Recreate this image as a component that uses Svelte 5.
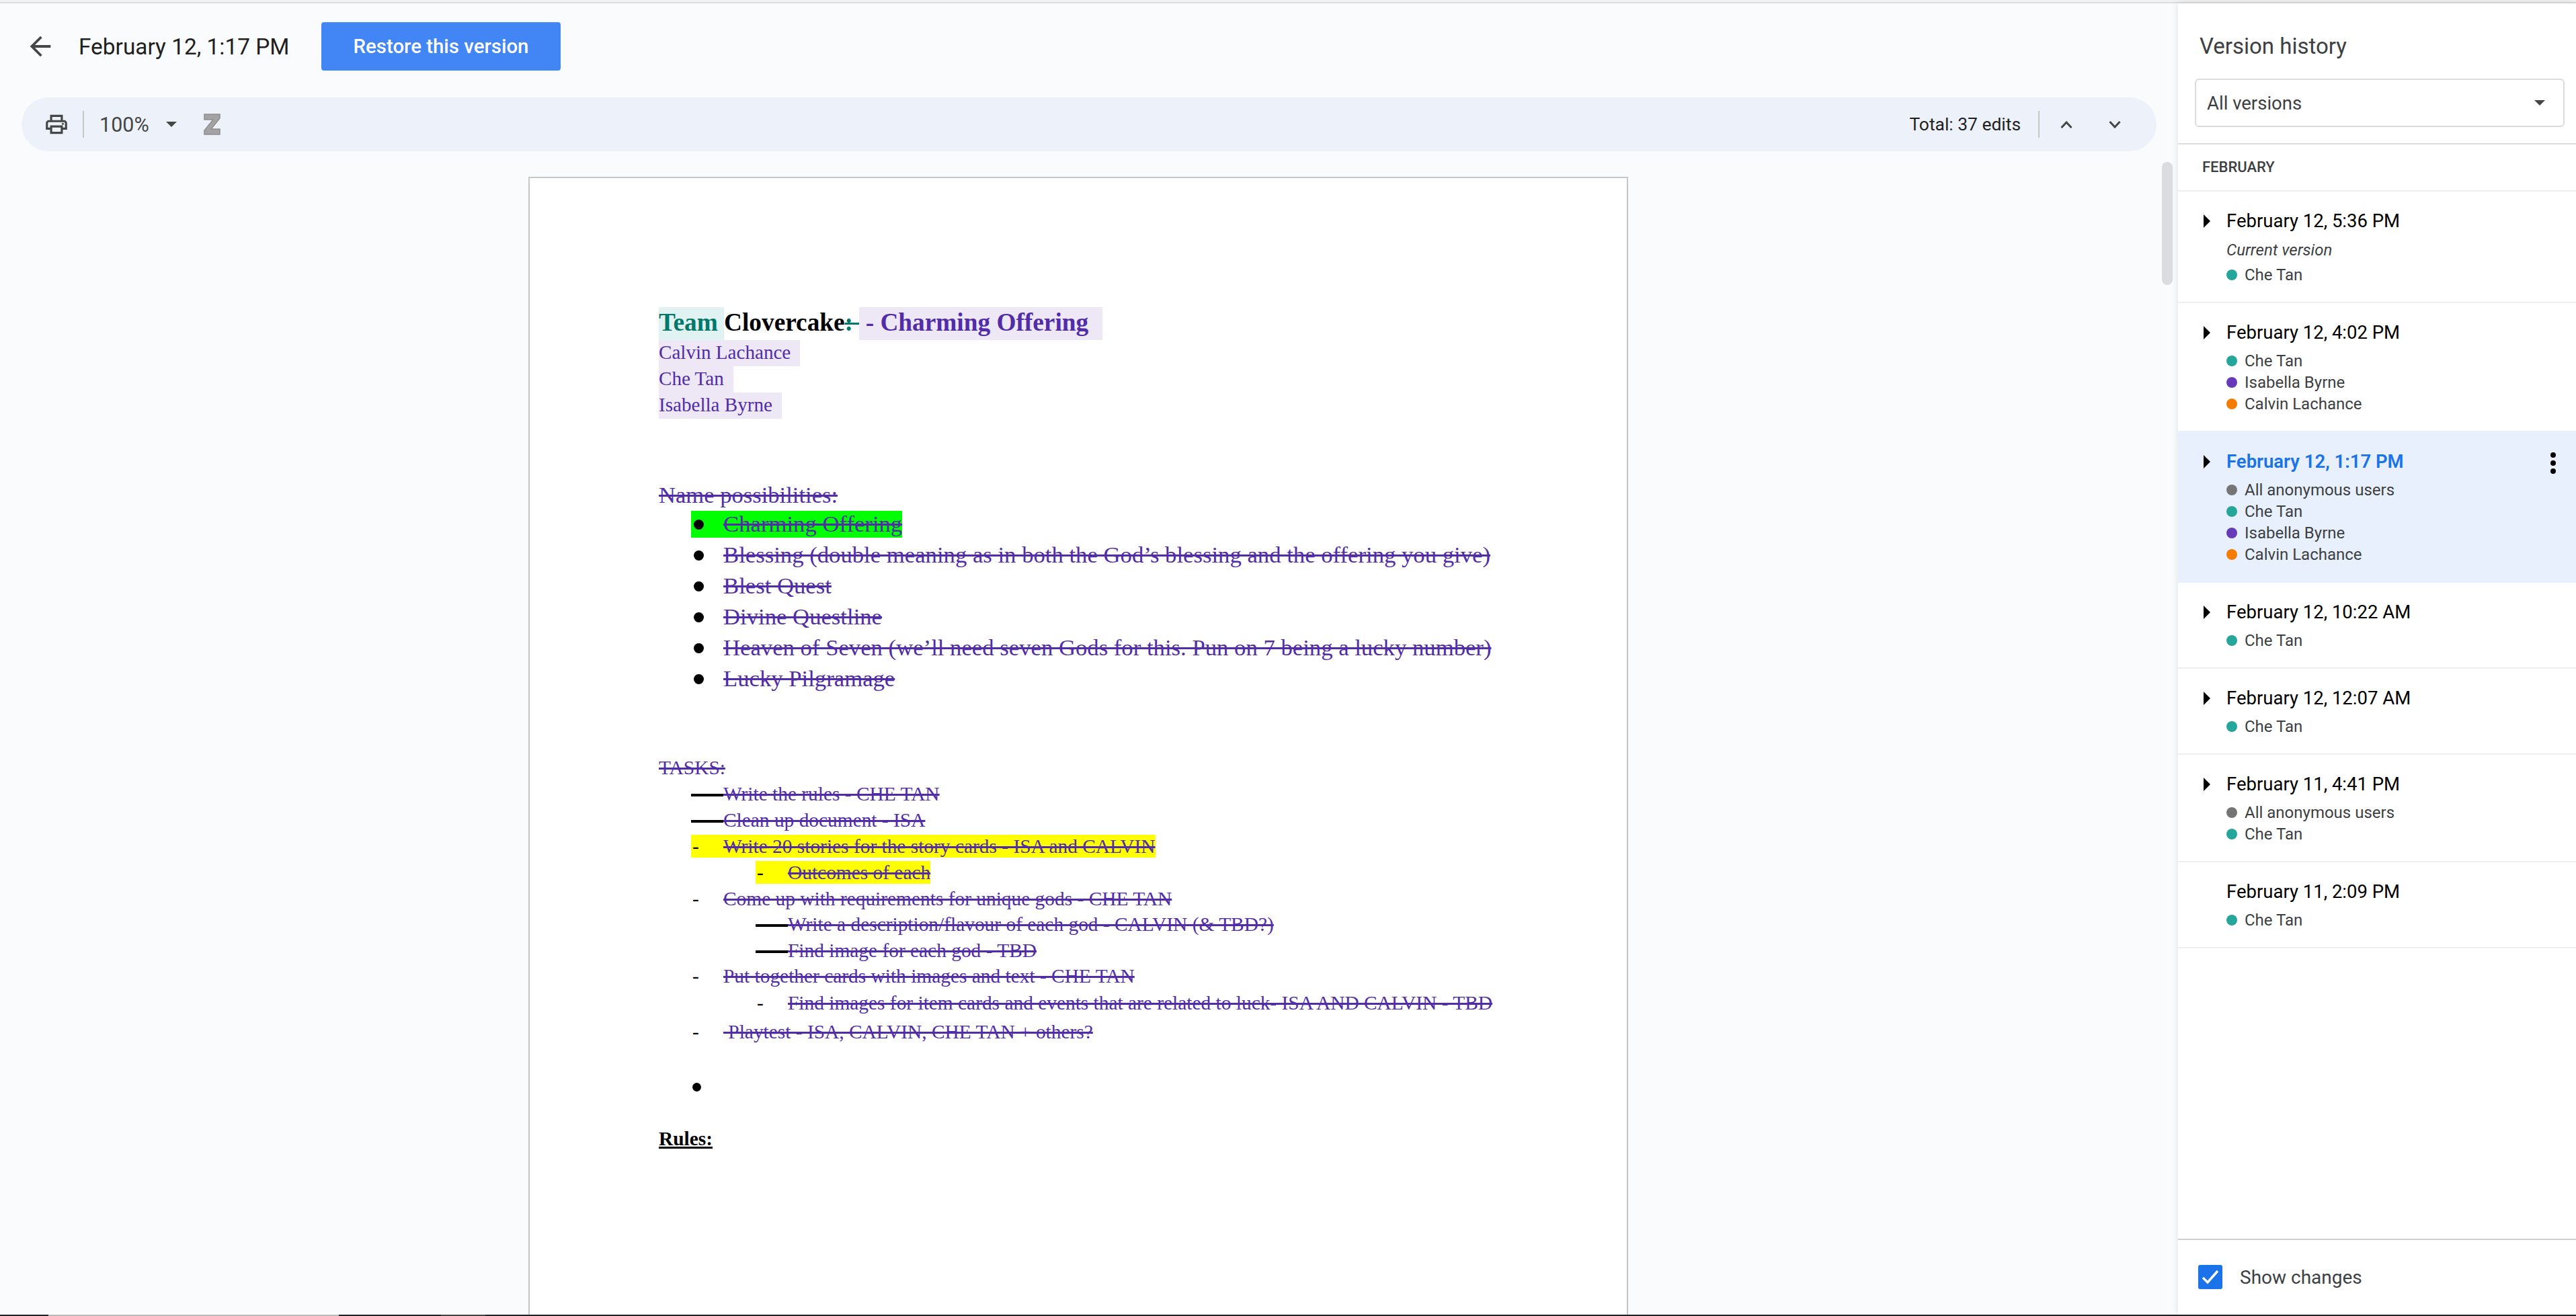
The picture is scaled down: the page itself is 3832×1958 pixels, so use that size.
<script>
	const people = {
		anon: { name: 'All anonymous users', color: '#757575' },
		che: { name: 'Che Tan', color: '#26a69a' },
		isa: { name: 'Isabella Byrne', color: '#673ab7' },
		calvin: { name: 'Calvin Lachance', color: '#f57c00' }
	};

	const versions = [
		{ date: 'February 12, 5:36 PM', current: true, who: ['che'], arrow: true },
		{ date: 'February 12, 4:02 PM', who: ['che', 'isa', 'calvin'], arrow: true },
		{ date: 'February 12, 1:17 PM', who: ['anon', 'che', 'isa', 'calvin'], arrow: true, selected: true },
		{ date: 'February 12, 10:22 AM', who: ['che'], arrow: true },
		{ date: 'February 12, 12:07 AM', who: ['che'], arrow: true },
		{ date: 'February 11, 4:41 PM', who: ['anon', 'che'], arrow: true },
		{ date: 'February 11, 2:09 PM', who: ['che'], arrow: false }
	];

	const names = [
		{ text: 'Charming Offering', green: true },
		{ text: 'Blessing (double meaning as in both the God’s blessing and the offering you give)' },
		{ text: 'Blest Quest' },
		{ text: 'Divine Questline' },
		{ text: 'Heaven of Seven (we’ll need seven Gods for this. Pun on 7 being a lucky number)' },
		{ text: 'Lucky Pilgramage' }
	];

	// gap = space above the row, level 1 is the nested list
	const tasks = [
		{ text: 'Write the rules - CHE TAN', gap: 5, struck: true },
		{ text: 'Clean up document - ISA', gap: 5, struck: true },
		{ text: 'Write 20 stories for the story cards - ISA and CALVIN', gap: 5, mark: true },
		{ text: 'Outcomes of each', gap: 5, level: 1, mark: true },
		{ text: 'Come up with requirements for unique gods - CHE TAN', gap: 5 },
		{ text: 'Write a description/flavour of each god - CALVIN (& TBD?)', gap: 4, level: 1, struck: true },
		{ text: 'Find image for each god - TBD', gap: 5, level: 1, struck: true },
		{ text: 'Put together cards with images and text - CHE TAN', gap: 4 },
		{ text: 'Find images for item cards and events that are related to luck- ISA AND CALVIN - TBD', gap: 6, level: 1 },
		{ text: '\u00a0Playtest - ISA, CALVIN, CHE TAN + others?', gap: 9 }
	];
</script>

<div class="app">
	<div class="browser-line"></div>
	<div class="main">
		<div class="left">
			<header class="topbar">
				<svg class="back" viewBox="0 0 24 24"><path d="M20 11H7.83l5.59-5.59L12 4l-8 8 8 8 1.41-1.41L7.83 13H20v-2z" /></svg>
				<div class="title">February 12, 1:17 PM</div>
				<button class="restore">Restore this version</button>
			</header>

			<div class="toolbar">
				<svg class="print" viewBox="0 0 24 24">
					<path d="M19 8h-1V3H6v5H5c-1.66 0-3 1.34-3 3v6h4v4h12v-4h4v-6c0-1.66-1.34-3-3-3zM8 5h8v3H8V5zm8 12v2H8v-4h8v2zm2-2v-2H6v2H4v-4c0-.55.45-1 1-1h14c.55 0 1 .45 1 1v4h-2z" />
					<circle cx="18" cy="11.5" r="1" />
				</svg>
				<span class="sep"></span>
				<span class="zoom">100%</span>
				<span class="caret"></span>
				<svg class="zotero" viewBox="0 0 25 32">
					<path d="M1 1h23v6L11 23h13v8H1v-6L14 9H1z" fill="#a3a3a3" stroke="#8f8f8f" stroke-width="1.5" />
				</svg>
				<span class="spacer"></span>
				<span class="total">Total: 37 edits</span>
				<span class="sep right"></span>
				<svg class="chev up" viewBox="0 0 18 11"><path d="M1.5 10L9 2l7.5 8" /></svg>
				<svg class="chev down" viewBox="0 0 18 11"><path d="M1.5 1L9 9l7.5-8" /></svg>
			</div>

			<div class="doc-area">
				<div class="scroll-thumb"></div>
				<div class="page">
					<div class="doc-title">
						<span class="teal-bg">Team&nbsp;</span><span class="black">Clovercake</span><span class="colon">:&nbsp;</span><span class="purple-bg">&nbsp;- Charming Offering</span>
					</div>
					<div class="author"><span>Calvin Lachance</span></div>
					<div class="author"><span>Che Tan</span></div>
					<div class="author"><span>Isabella Byrne</span></div>

					<div class="name-head">Name possibilities:</div>
					<ul class="names">
						{#each names as n}
							<li class:green={n.green}>
								<span class="dot"></span>
								<span class="struck-text">{n.text}</span>
							</li>
						{/each}
					</ul>

					<div class="tasks-head">TASKS:</div>
					<ul class="tasks">
						{#each tasks as t}
							<li class:nested={t.level === 1} style="margin-top: {t.gap}px">
								<div class="task-inner" class:mark={t.mark}>
									<span class="dash" class:dash-struck={t.struck}>-</span>
									<span class="struck-text">{t.text}</span>
								</div>
							</li>
						{/each}
					</ul>

					<div class="empty-item"><span class="dot small"></span></div>
					<div class="rules">Rules:</div>
				</div>
			</div>
		</div>

		<aside class="panel">
			<div class="panel-head">Version history</div>
			<div class="select">
				<span>All versions</span>
				<span class="caret"></span>
			</div>
			<div class="month">FEBRUARY</div>

			<div class="list">
				{#each versions as v}
					<div class="version" class:selected={v.selected}>
						<div class="date-row">
							{#if v.arrow}<span class="arrow"></span>{/if}
							<span class="date">{v.date}</span>
							{#if v.selected}
								<span class="more"><i></i><i></i><i></i></span>
							{/if}
						</div>
						{#if v.current}
							<div class="current">Current version</div>
						{/if}
						<div class="people">
							{#each v.who as p}
								<div class="person">
									<span class="pdot" style="background: {people[p].color}"></span>
									{people[p].name}
								</div>
							{/each}
						</div>
					</div>
				{/each}
			</div>

			<div class="footer">
				<span class="check">
					<svg viewBox="0 0 36 36"><path d="M7 19l7 7L29 9" /></svg>
				</span>
				<span class="show">Show changes</span>
			</div>
		</aside>
	</div>
	<div class="taskbar">
		<span class="seg s1"></span>
		<span class="seg s2"></span>
		<span class="seg s3"></span>
		<span class="seg s4"></span>
	</div>
</div>

<style>
	:global(body) {
		margin: 0;
		background: #f9fbfd;
	}

	.app {
		width: 3832px;
		height: 1958px;
		display: flex;
		flex-direction: column;
		overflow: hidden;
		font-family: Roboto, sans-serif;
	}

	.browser-line {
		height: 3px;
		background: #f1f1f1;
		border-bottom: 2px solid #dadce0;
		flex: none;
	}

	.main {
		flex: 1;
		display: flex;
		min-height: 0;
	}

	.taskbar {
		height: 2px;
		background: #202124;
		flex: none;
		display: flex;
	}

	.seg.s1 {
		width: 72px;
	}

	.seg.s2 {
		width: 432px;
		background: #b9b9b9;
	}

	.seg.s3 {
		width: 152px;
	}

	.seg.s4 {
		width: 66px;
		background: #444444;
	}

	/* left side */
	.left {
		flex: 1;
		min-width: 0;
		display: flex;
		flex-direction: column;
		background: #f9fbfd;
		position: relative;
	}

	.topbar {
		margin-top: 28px;
		height: 72px;
		display: flex;
		align-items: center;
		padding-left: 37px;
		flex: none;
	}

	.back {
		width: 46px;
		height: 46px;
		fill: #444746;
		flex: none;
	}

	.title {
		margin-left: 34px;
		width: 361px;
		font-size: 33.4px;
		color: #1f1f1f;
		white-space: nowrap;
		flex: none;
	}

	.restore {
		width: 356px;
		height: 72px;
		border: none;
		border-radius: 4px;
		background: #4285f4;
		color: #fff;
		font-family: Roboto, sans-serif;
		font-size: 29.4px;
		font-weight: 500;
		padding: 0;
		flex: none;
	}

	.toolbar {
		margin: 40px 32px 0;
		width: 3176px;
		height: 80px;
		border-radius: 40px;
		background: #edf2fa;
		display: flex;
		align-items: center;
		flex: none;
	}

	.print {
		width: 38px;
		height: 38px;
		fill: #444746;
		margin-left: 33px;
		flex: none;
	}

	.sep {
		width: 2px;
		height: 40px;
		background: #c7c7c7;
		margin-left: 20px;
		flex: none;
	}

	.zoom {
		margin-left: 23px;
		width: 99px;
		font-size: 30.5px;
		color: #444746;
	}

	.caret {
		width: 0;
		height: 0;
		border-left: 8px solid transparent;
		border-right: 8px solid transparent;
		border-top: 8px solid #444746;
		flex: none;
	}

	.zotero {
		width: 25px;
		height: 32px;
		margin-left: 40px;
		flex: none;
	}

	.spacer {
		flex: 1;
	}

	.total {
		font-size: 26.4px;
		color: #1f1f1f;
	}

	.sep.right {
		margin-left: 26px;
	}

	.chev {
		width: 18px;
		height: 11px;
		fill: none;
		stroke: #444746;
		stroke-width: 3;
		flex: none;
	}

	.chev.up {
		margin-left: 31px;
	}

	.chev.down {
		margin-left: 54px;
		margin-right: 53px;
	}

	.doc-area {
		flex: 1;
		min-height: 0;
		margin-top: 38px;
		padding-left: 786px;
		overflow: hidden;
	}

	.scroll-thumb {
		position: absolute;
		left: 3216px;
		top: 236px;
		width: 16px;
		height: 183px;
		border-radius: 8px;
		background: #dadce0;
	}

	/* the document */
	.page {
		width: 1636px;
		height: 1800px;
		box-sizing: border-box;
		background: #fff;
		border: 2px solid #c7c7c7;
		padding: 192px 0 0 192px;
		font-family: 'Liberation Serif', 'Times New Roman', serif;
		color: #512da8;
		white-space: nowrap;
	}

	.doc-title {
		display: flex;
		height: 49px;
		line-height: 46px;
		font-size: 37.3px;
		font-weight: 700;
	}

	.teal-bg {
		background: #e0f2f1;
		color: #00796b;
	}

	.black {
		color: #000;
	}

	.colon {
		color: #00796b;
		text-decoration: line-through;
		text-decoration-thickness: 3px;
	}

	.purple-bg {
		background: #ede7f6;
		padding-right: 21px;
	}

	.author {
		height: 39px;
		font-size: 29.1px;
	}

	.author span {
		display: inline-block;
		height: 39px;
		line-height: 36px;
		background: #ede7f6;
		padding-right: 14px;
	}

	.name-head {
		margin-top: 93px;
		height: 40px;
		line-height: 40px;
		font-size: 34.6px;
		text-decoration: line-through;
		text-decoration-thickness: 3px;
	}

	ul {
		list-style: none;
		margin: 0;
		padding: 0;
	}

	.names {
		margin: 4px 0 0 48px;
	}

	.names li {
		width: max-content;
		height: 40px;
		line-height: 40px;
		font-size: 34.7px;
		display: flex;
		align-items: center;
		margin-bottom: 6px;
	}

	.names li.green {
		background: #00ff00;
	}

	.dot {
		width: 15px;
		height: 15px;
		border-radius: 50%;
		background: #000;
		margin: 0 29px 0 4px;
		flex: none;
	}

	.struck-text {
		text-decoration: line-through;
		text-decoration-thickness: 3px;
	}

	.tasks-head {
		margin-top: 95px;
		height: 34px;
		line-height: 34px;
		font-size: 29.4px;
		text-decoration: line-through;
		text-decoration-thickness: 3px;
	}

	.tasks {
		font-size: 29.4px;
		line-height: 34px;
		margin-left: 48px;
	}

	.tasks li {
		height: 34px;
	}

	.tasks li.nested {
		margin-left: 96px;
	}

	.task-inner {
		display: flex;
		width: max-content;
		height: 34px;
	}

	.task-inner.mark {
		background: #ffff00;
	}

	.dash {
		width: 46px;
		padding-left: 2px;
		color: #000;
		flex: none;
		position: relative;
	}

	.dash-struck::after {
		content: '';
		position: absolute;
		left: 0;
		right: 0;
		top: 17px;
		height: 4px;
		background: #000;
	}

	.empty-item {
		height: 34px;
		margin: 48px 0 0 50px;
		display: flex;
		align-items: center;
	}

	.dot.small {
		width: 13px;
		height: 13px;
		margin: 0;
	}

	.rules {
		margin-top: 43px;
		font-size: 29.4px;
		line-height: 34px;
		font-weight: 700;
		color: #000;
		text-decoration: underline;
		text-decoration-thickness: 3px;
	}

	/* version history panel */
	.panel {
		width: 592px;
		flex: none;
		background: #fff;
		box-shadow: 0 0 10px rgba(60, 64, 67, 0.15);
		display: flex;
		flex-direction: column;
		position: relative;
	}

	.panel-head {
		margin: 44px 0 0 32px;
		height: 40px;
		line-height: 40px;
		font-size: 33px;
		color: #3c4043;
	}

	.select {
		margin: 28px 17px 0 25px;
		height: 72px;
		box-sizing: border-box;
		border: 2px solid #dadce0;
		border-radius: 6px;
		padding: 0 27px 0 16px;
		display: flex;
		align-items: center;
		justify-content: space-between;
		font-size: 27.5px;
		color: #3c4043;
	}

	.month {
		margin-top: 24px;
		border-top: 2px solid #dadce0;
		height: 68px;
		line-height: 68px;
		padding-left: 36px;
		font-size: 22px;
		font-weight: 500;
		color: #3c4043;
	}

	.version {
		border-top: 2px solid #eeeeee;
		padding: 28px 0 24px 72px;
		position: relative;
	}

	.version:last-child {
		border-bottom: 2px solid #eeeeee;
	}

	.version.selected {
		background: #e8f0fe;
		border-top-color: #e8f0fe;
	}

	.version.selected + .version {
		border-top-color: #e8f0fe;
	}

	.date-row {
		height: 32px;
		line-height: 32px;
		font-size: 27.5px;
		color: #000;
	}

	.selected .date {
		color: #1a73e8;
		font-weight: 600;
	}

	.arrow {
		position: absolute;
		left: 38px;
		width: 0;
		height: 0;
		margin-top: 6px;
		border-top: 10px solid transparent;
		border-bottom: 10px solid transparent;
		border-left: 10px solid #000;
	}

	.more {
		position: absolute;
		left: 554px;
		top: 30px;
		display: flex;
		flex-direction: column;
		gap: 4px;
	}

	.more i {
		display: block;
		width: 8px;
		height: 8px;
		border-radius: 50%;
		background: #000;
	}

	.current {
		margin: 11px 0 5px;
		height: 32px;
		line-height: 32px;
		font-size: 24px;
		font-style: italic;
		color: #3c4043;
	}

	.current + .people {
		margin-top: 0;
	}

	.people {
		margin-top: 10px;
	}

	.person {
		height: 32px;
		line-height: 32px;
		font-size: 24px;
		color: #3c4043;
		display: flex;
		align-items: center;
	}

	.pdot {
		width: 16px;
		height: 16px;
		border-radius: 50%;
		margin-right: 11px;
		flex: none;
	}

	.footer {
		margin-top: auto;
		height: 113px;
		border-top: 2px solid #cfcfcf;
		display: flex;
		align-items: center;
		padding-left: 30px;
		box-sizing: border-box;
	}

	.check {
		width: 36px;
		height: 36px;
		border-radius: 3px;
		background: #1a73e8;
		flex: none;
		margin-top: -2px;
	}

	.check svg {
		display: block;
		fill: none;
		stroke: #fff;
		stroke-width: 3.5;
	}

	.show {
		margin-left: 26px;
		font-size: 28px;
		color: #3c4043;
	}
</style>
